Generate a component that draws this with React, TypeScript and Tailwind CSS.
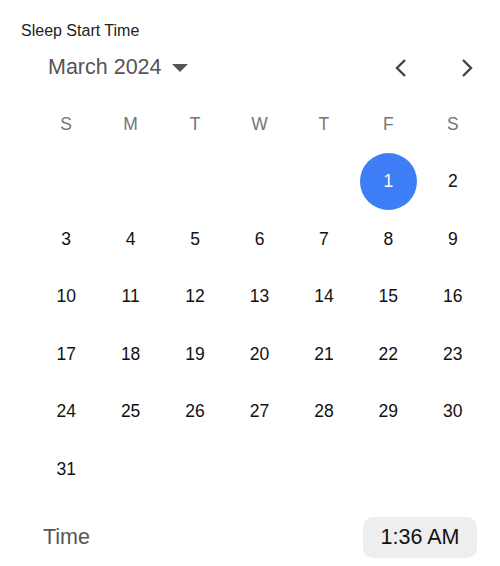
import React from "react";

const weekdays = ["S", "M", "T", "W", "T", "F", "S"];

export default function App() {
  const cells: (number | null)[] = [];
  for (let i = 0; i < 5; i++) cells.push(null);
  for (let d = 1; d <= 31; d++) cells.push(d);
  while (cells.length < 42) cells.push(null);
  const rows: (number | null)[][] = [];
  for (let r = 0; r < 6; r++) rows.push(cells.slice(r * 7, r * 7 + 7));

  return (
    <div
      className="w-[500px] h-[566px] bg-white overflow-hidden"
      style={{ fontFamily: '"Liberation Sans", Arial, sans-serif' }}
    >
      <div className="pt-[21px] pl-[21px] text-[16px] leading-[20px] text-[#222]">
        Sleep Start Time
      </div>
      <div className="flex items-center h-[36px] mt-[9px] pl-[48px] pr-[24px]">
        <span className="text-[21.5px] text-[#555] leading-none">March 2024</span>
        <svg width="18" height="10" viewBox="0 0 18 10" className="ml-[9px]">
          <polygon points="1,1 17,1 9,9" fill="#555" />
        </svg>
        <div className="ml-auto flex items-center gap-[44px]">
          <svg width="20" height="24" viewBox="0 0 20 24">
            <polyline points="13,4 5,12 13,20" fill="none" stroke="#444" strokeWidth="2.4" />
          </svg>
          <svg width="20" height="24" viewBox="0 0 20 24">
            <polyline points="7,4 15,12 7,20" fill="none" stroke="#444" strokeWidth="2.4" />
          </svg>
        </div>
      </div>
      <div className="ml-[34px] w-[451px] mt-[9px]">
        <div className="grid grid-cols-7 h-[57.5px] items-center">
          {weekdays.map((w, i) => (
            <div key={i} className="text-center text-[17.5px] text-[#757575]">
              {w}
            </div>
          ))}
        </div>
        {rows.map((row, r) => (
          <div key={r} className="grid grid-cols-7 h-[57.5px] items-center">
            {row.map((d, i) => (
              <div key={i} className="flex justify-center items-center">
                {d === 1 ? (
                  <div className="w-[57px] h-[57px] rounded-full bg-[#3d7ef6] text-white flex items-center justify-center text-[17.5px]">
                    1
                  </div>
                ) : (
                  <span className="text-[17.5px] text-[#111]">{d ?? ""}</span>
                )}
              </div>
            ))}
          </div>
        ))}
      </div>
      <div className="flex items-center justify-between pl-[43px] pr-[23px] mt-[19px]">
        <span className="text-[21.5px] text-[#555]">Time</span>
        <div className="w-[114px] h-[41px] rounded-[10px] bg-[#eeeeee] flex items-center justify-center text-[21.5px] text-[#111]">
          1:36 AM
        </div>
      </div>
    </div>
  );
}
